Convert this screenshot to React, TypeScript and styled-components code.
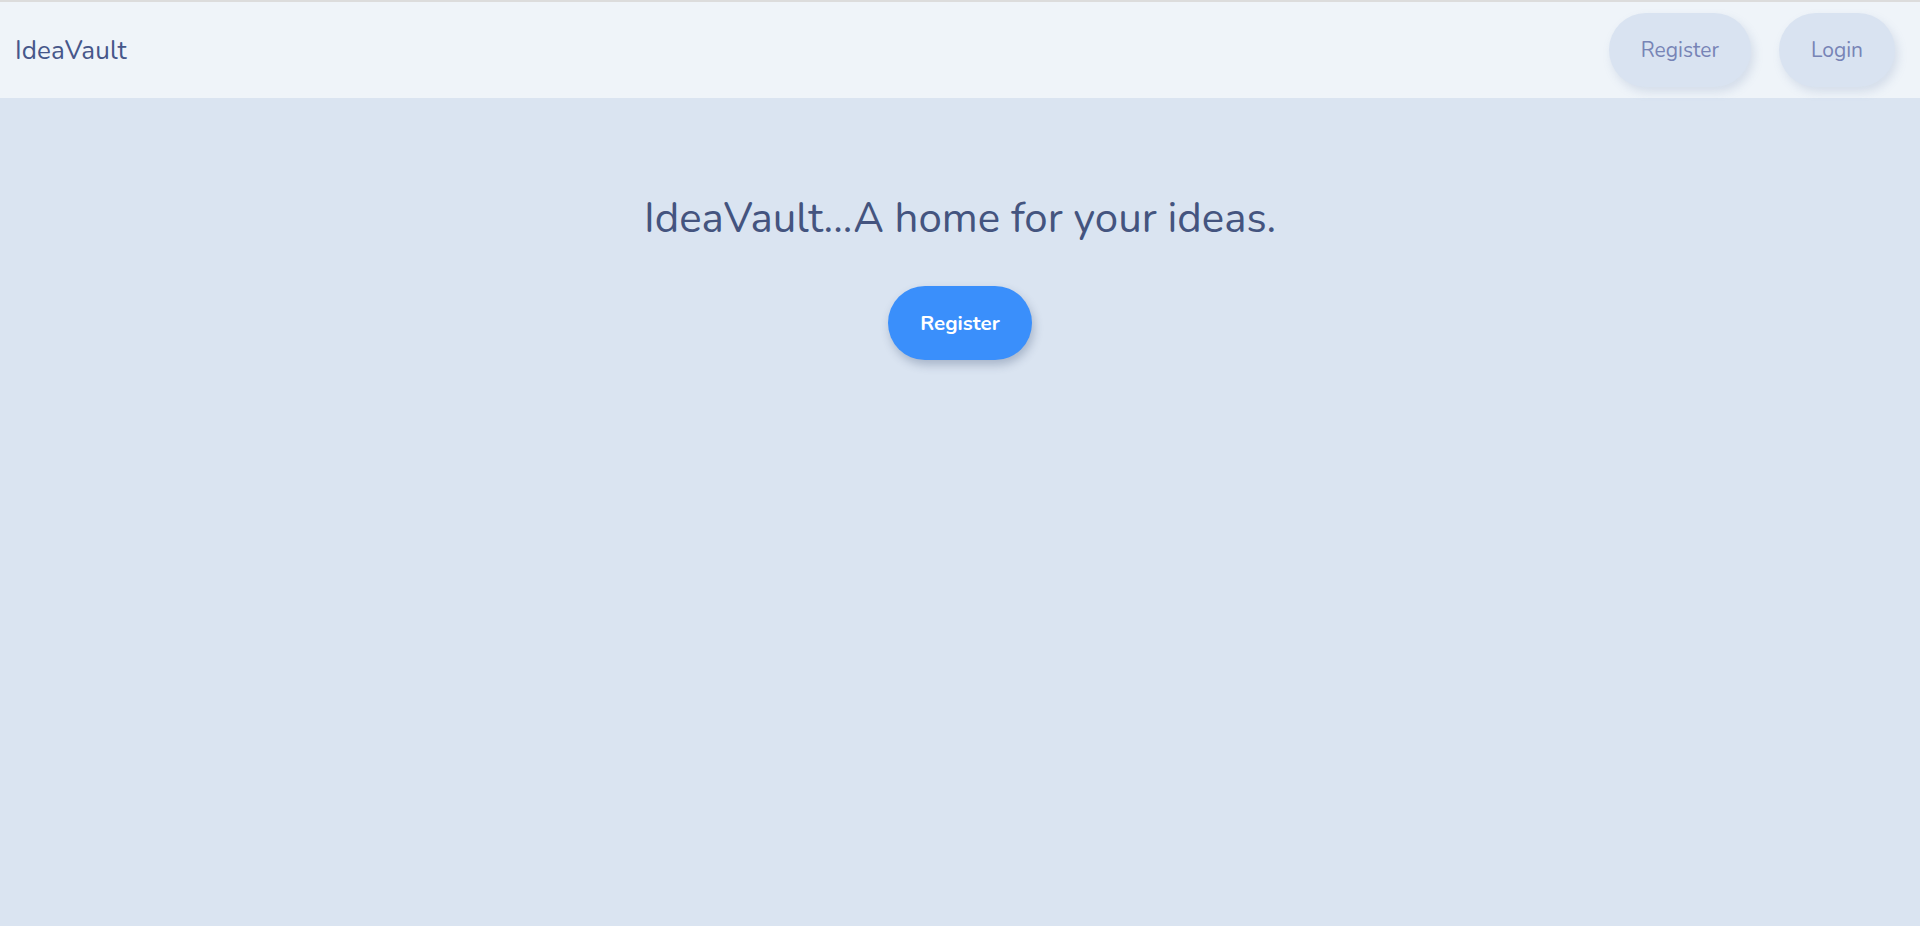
import React from "react";
import styled, { createGlobalStyle } from "styled-components";

const GlobalStyle = createGlobalStyle`
  html, body {
    margin: 0;
    padding: 0;
    background: #dae4f1;
    font-family: "Nunito", Lato, "Open Sans", sans-serif;
  }
  * { box-sizing: border-box; }
`;

const Page = styled.div`
  min-height: 926px;
  background: #dae4f1;
  border-top: 2px solid #dcdcdc;
`;

const NavBar = styled.header`
  height: 96px;
  background: #eff4f9;
  display: flex;
  align-items: center;
  justify-content: space-between;
  padding: 0 25px 0 15px;
`;

const Brand = styled.div`
  font-size: 26px;
  color: #46578a;
  letter-spacing: 0.1px;
`;

const NavActions = styled.nav`
  display: flex;
  gap: 28px;
  align-items: center;
`;

const PillButton = styled.button<{ $primary?: boolean }>`
  font-family: inherit;
  font-size: ${(p) => (p.$primary ? "20.5px" : "21px")};
  line-height: 26px;
  padding: 24px 32px;
  border: none;
  border-radius: 40px;
  cursor: pointer;
  font-weight: ${(p) => (p.$primary ? 700 : 400)};
  color: ${(p) => (p.$primary ? "#ffffff" : "#7784b6")};
  background: ${(p) => (p.$primary ? "#3a8ffb" : "#d9e3f1")};
  box-shadow: ${(p) =>
    p.$primary
      ? "2px 5px 10px rgba(40, 60, 100, 0.28)"
      : "3px 5px 10px rgba(120, 140, 180, 0.22)"};
`;

const Hero = styled.main`
  display: flex;
  flex-direction: column;
  align-items: center;
  padding-top: 96px;
  gap: 42px;
`;

const Title = styled.h1`
  margin: 0;
  font-size: 42px;
  line-height: 50px;
  font-weight: 400;
  color: #44547f;
`;

export default function App() {
  return (
    <>
      <GlobalStyle />
      <Page>
        <NavBar>
          <Brand>IdeaVault</Brand>
          <NavActions>
            <PillButton>Register</PillButton>
            <PillButton>Login</PillButton>
          </NavActions>
        </NavBar>
        <Hero>
          <Title>IdeaVault...A home for your ideas.</Title>
          <PillButton $primary>Register</PillButton>
        </Hero>
      </Page>
    </>
  );
}
